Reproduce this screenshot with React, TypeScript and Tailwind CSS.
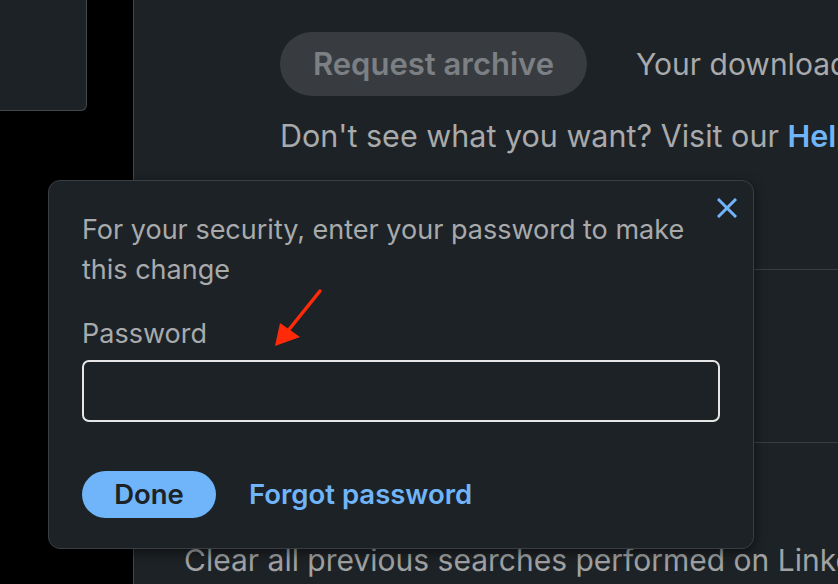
import React from "react";

export default function App() {
  return (
    <div
      className="relative flex h-[584px] w-[838px] overflow-hidden bg-black"
      style={{ fontFamily: "Inter, 'Noto Sans', sans-serif" }}
    >
      {/* left column */}
      <div className="w-[133px] shrink-0">
        <div className="h-[111px] w-[87px] rounded-br-[6px] border-b border-r border-[#44484c] bg-[#1d2226]" />
      </div>

      {/* main panel */}
      <div className="flex min-w-0 flex-1 flex-col border-l border-[#44484c] bg-[#1d2226]">
        <div className="h-[270px] shrink-0 border-b border-[#3a3e42] pl-[146px] pt-[32px]">
          <div className="flex items-center gap-[49px] whitespace-nowrap">
            <div className="flex h-[64px] w-[307px] shrink-0 items-center justify-center rounded-full bg-[#383c40] text-[31px] font-semibold text-[#7c8084]">
              Request archive
            </div>
            <span className="text-[30px] text-[#a8aaac]">Your download will be ready soon</span>
          </div>
          <div className="mt-[20px] whitespace-nowrap text-[30.5px] leading-[40px] text-[#a8aaac]">
            Don't see what you want? Visit our{" "}
            <span className="font-semibold text-[#70b5f9]">Help Center</span>
          </div>
        </div>
        <div className="h-[173px] shrink-0 border-b border-[#3a3e42]" />
        <div className="whitespace-nowrap pl-[50px] pt-[97px] text-[30px] leading-[40px] text-[#a0a2a4]">
          Clear all previous searches performed on LinkedIn
        </div>
      </div>

      {/* dialog */}
      <div className="absolute left-[48px] top-[180px] h-[369px] w-[706px] rounded-[12px] border border-[#3a3e42] bg-[#1d2226] px-[33px] pt-[29px] shadow-[0_4px_12px_rgba(0,0,0,0.5)]">
        <button className="absolute right-[16px] top-[17px] flex h-[20px] w-[20px] items-center justify-center">
          <svg width="20" height="20" viewBox="0 0 20 20">
            <path d="M2 2 L18 18 M18 2 L2 18" stroke="#70b5f9" strokeWidth="3" strokeLinecap="square" />
          </svg>
        </button>
        <p className="w-[640px] text-[27px] leading-[40px] text-[#a8aaac]">
          For your security, enter your password to make this change
        </p>
        <label className="mt-[24px] block text-[27px] leading-[40px] text-[#a8aaac]">Password</label>
        <div className="mt-[6px] h-[62px] w-[638px] rounded-[7px] border-2 border-[#e6e6e6]" />
        <div className="mt-[49px] flex items-center gap-[33px]">
          <button className="h-[47px] w-[134px] rounded-full bg-[#70b5f9] text-[27.5px] font-semibold text-[#1d2226]">
            Done
          </button>
          <span className="text-[27.5px] font-semibold text-[#70b5f9]">Forgot password</span>
        </div>
      </div>

      {/* annotation arrow */}
      <svg className="absolute left-0 top-0" width="838" height="584" viewBox="0 0 838 584">
        <line x1="320" y1="291" x2="287" y2="332" stroke="#ff2a0a" strokeWidth="3.5" strokeLinecap="round" />
        <polygon points="275,346 280,323 300,337" fill="#ff2a0a" />
      </svg>
    </div>
  );
}
